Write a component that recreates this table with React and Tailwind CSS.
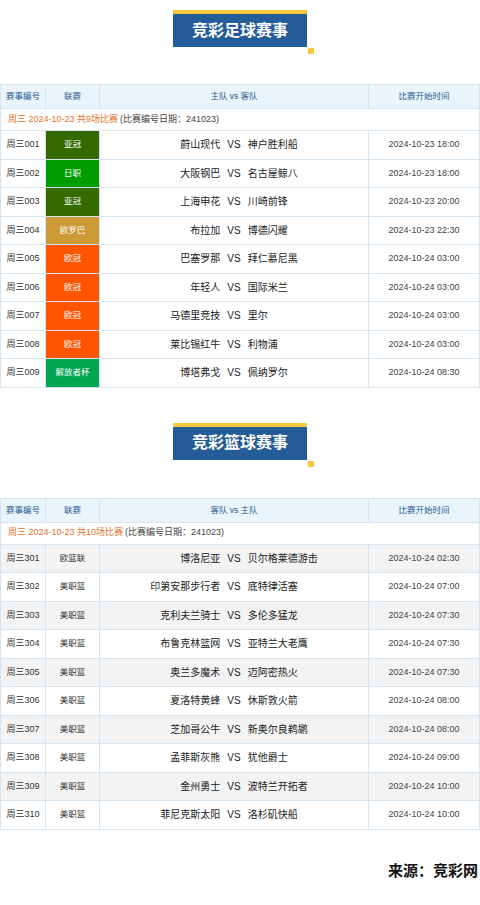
const football = [
  { no: "周三001", league: "亚冠", color: "bg-[#356a00]", home: "蔚山现代", away: "神户胜利船", time: "2024-10-23 18:00" },
  { no: "周三002", league: "日职", color: "bg-[#009d00]", home: "大阪钢巴", away: "名古屋鲸八", time: "2024-10-23 18:00" },
  { no: "周三003", league: "亚冠", color: "bg-[#356a00]", home: "上海申花", away: "川崎前锋", time: "2024-10-23 20:00" },
  { no: "周三004", league: "欧罗巴", color: "bg-[#cc9a36]", home: "布拉加", away: "博德闪耀", time: "2024-10-23 22:30" },
  { no: "周三005", league: "欧冠", color: "bg-[#ff5500]", home: "巴塞罗那", away: "拜仁慕尼黑", time: "2024-10-24 03:00" },
  { no: "周三006", league: "欧冠", color: "bg-[#ff5500]", home: "年轻人", away: "国际米兰", time: "2024-10-24 03:00" },
  { no: "周三007", league: "欧冠", color: "bg-[#ff5500]", home: "马德里竞技", away: "里尔", time: "2024-10-24 03:00" },
  { no: "周三008", league: "欧冠", color: "bg-[#ff5500]", home: "莱比锡红牛", away: "利物浦", time: "2024-10-24 03:00" },
  { no: "周三009", league: "解放者杯", color: "bg-[#00a651]", home: "博塔弗戈", away: "佩纳罗尔", time: "2024-10-24 08:30" },
];

const basketball = [
  { no: "周三301", league: "欧篮联", home: "博洛尼亚", away: "贝尔格莱德游击", time: "2024-10-24 02:30" },
  { no: "周三302", league: "美职篮", home: "印第安那步行者", away: "底特律活塞", time: "2024-10-24 07:00" },
  { no: "周三303", league: "美职篮", home: "克利夫兰骑士", away: "多伦多猛龙", time: "2024-10-24 07:30" },
  { no: "周三304", league: "美职篮", home: "布鲁克林篮网", away: "亚特兰大老鹰", time: "2024-10-24 07:30" },
  { no: "周三305", league: "美职篮", home: "奥兰多魔术", away: "迈阿密热火", time: "2024-10-24 07:30" },
  { no: "周三306", league: "美职篮", home: "夏洛特黄蜂", away: "休斯敦火箭", time: "2024-10-24 08:00" },
  { no: "周三307", league: "美职篮", home: "芝加哥公牛", away: "新奥尔良鹈鹕", time: "2024-10-24 08:00" },
  { no: "周三308", league: "美职篮", home: "孟菲斯灰熊", away: "犹他爵士", time: "2024-10-24 09:00" },
  { no: "周三309", league: "美职篮", home: "金州勇士", away: "波特兰开拓者", time: "2024-10-24 10:00" },
  { no: "周三310", league: "美职篮", home: "菲尼克斯太阳", away: "洛杉矶快船", time: "2024-10-24 10:00" },
];

const grid = "grid grid-cols-[45px_54px_1fr_110px]";
const line = "border-[#d5e4ef]";

function Title({ text }) {
  return (
    <div className="flex justify-center">
      <div className="relative">
        <div className="h-[4px] bg-[#f8c83e]" />
        <div className="bg-[#245c98] px-[19px] h-[33px] flex items-center text-white text-[16px] font-bold">
          {text}
        </div>
        <div className="absolute -right-[7px] -bottom-[7px] w-[6px] h-[6px] bg-[#f8c83e]" />
      </div>
    </div>
  );
}

function Table({ vsLabel, summary, rows, striped }) {
  return (
    <div className={`border-l border-r ${line}`}>
      <div className={`${grid} h-[25px] bg-[#e9f4fc] border-y ${line} text-[8.5px] text-[#2b5c90]`}>
        <div className={`flex items-center justify-center border-r ${line}`}>赛事编号</div>
        <div className={`flex items-center justify-center border-r ${line}`}>联赛</div>
        <div className={`flex items-center justify-center border-r ${line}`}>{vsLabel}</div>
        <div className="flex items-center justify-center">比赛开始时间</div>
      </div>
      <div className={`h-[22px] flex items-center px-[7px] text-[9px] border-b ${line}`}>
        <span className="text-[#e8732c]">{summary}</span>
        <span className="text-[#444] ml-[2px]">(比赛编号日期：241023)</span>
      </div>
      {rows.map((r, i) => (
        <div
          key={r.no}
          className={`${grid} h-[28.5px] border-b ${line} ${striped && i % 2 === 0 ? "bg-[#f3f3f3]" : "bg-white"}`}
        >
          <div className={`flex items-center justify-center border-r ${line} text-[9px] text-[#333]`}>{r.no}</div>
          <div
            className={`flex items-center justify-center border-r ${line} text-[8.5px] ${
              r.color ? `${r.color} text-white` : "text-[#333]"
            }`}
          >
            {r.league}
          </div>
          <div className={`grid grid-cols-[1fr_auto_1fr] items-center border-r ${line} text-[10px] text-[#222]`}>
            <span className="text-right">{r.home}</span>
            <span className="px-[7px]">VS</span>
            <span>{r.away}</span>
          </div>
          <div className="flex items-center justify-center text-[9px] text-[#444]">{r.time}</div>
        </div>
      ))}
    </div>
  );
}

export default function App() {
  return (
    <div
      className="w-[480px] min-h-[905px] bg-white pt-[10px]"
      style={{ fontFamily: '"Liberation Sans", "Noto Sans CJK SC", sans-serif' }}
    >
      <Title text="竞彩足球赛事" />
      <div className="mt-[37px]">
        <Table vsLabel="主队 vs 客队" summary="周三 2024-10-23 共9场比赛" rows={football} />
      </div>
      <div className="mt-[35px]">
        <Title text="竞彩篮球赛事" />
      </div>
      <div className="mt-[38px]">
        <Table vsLabel="客队 vs 主队" summary="周三 2024-10-23 共10场比赛" rows={basketball} striped />
      </div>
      <div className="mt-[30px] flex justify-end pr-[2px] text-[15px] font-bold text-[#111]">来源：竞彩网</div>
    </div>
  );
}
